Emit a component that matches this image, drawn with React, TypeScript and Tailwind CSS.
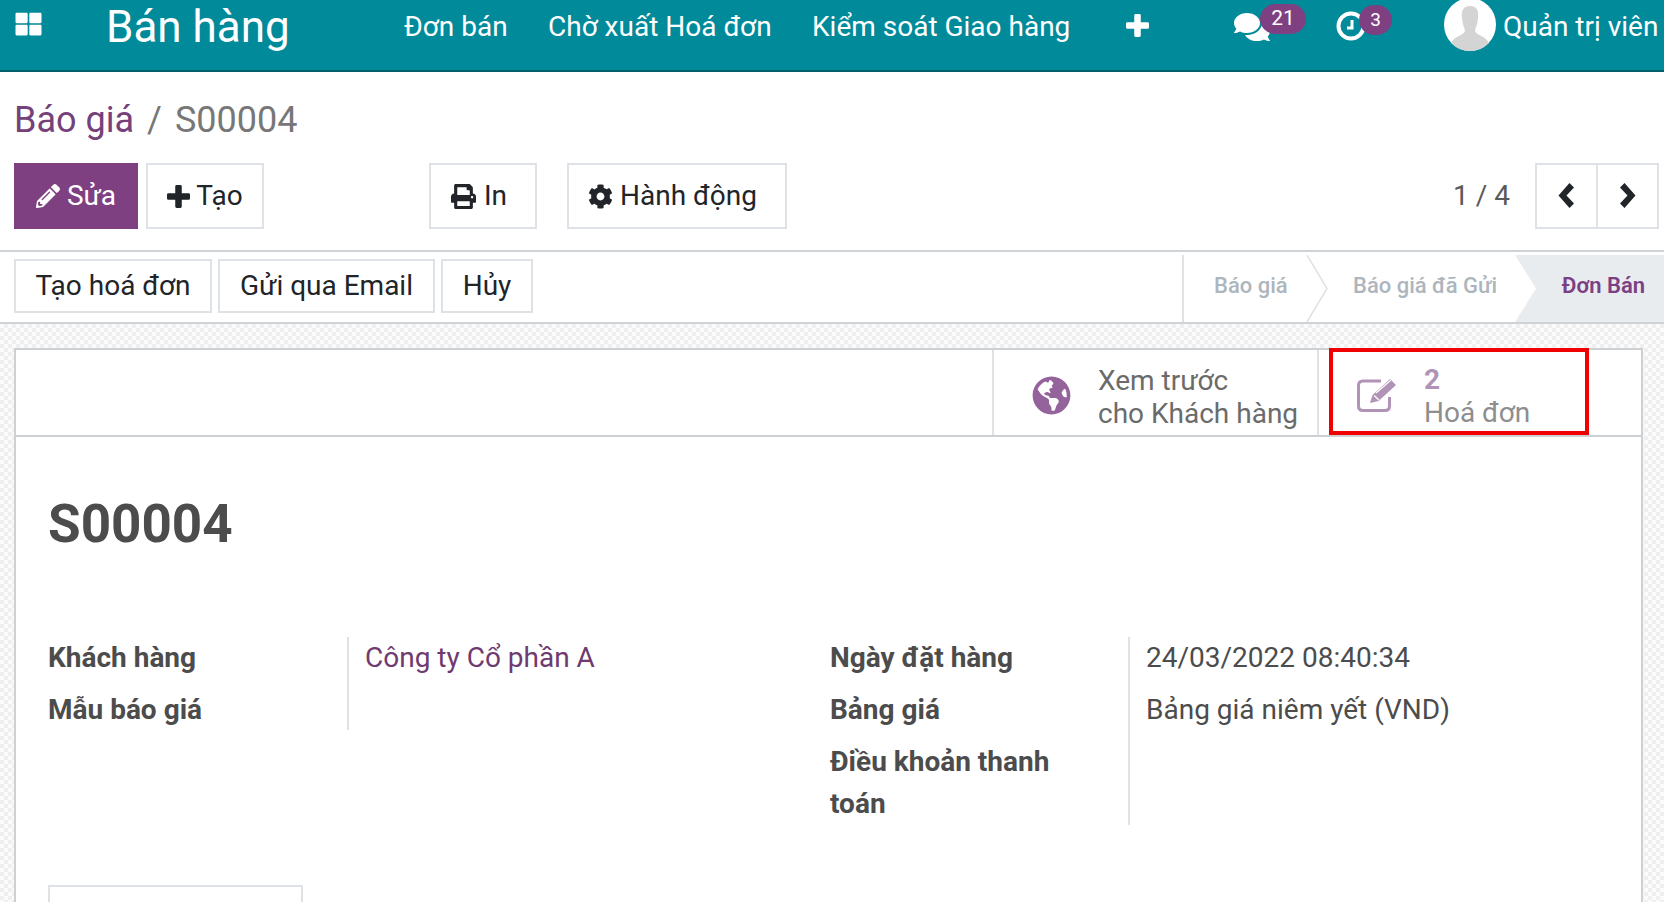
import React from "react";
import { FaThLarge, FaPencilAlt, FaPrint, FaCog, FaComments, FaGlobeAmericas } from "react-icons/fa";

function Btn({ className, children }: { className: string; children: React.ReactNode }) {
  return (
    <div className={"flex items-center justify-center border-2 border-[#dee2e6] text-[#212529] " + className}>
      {children}
    </div>
  );
}

function Plus({ className }: { className: string }) {
  return (
    <svg className={className} viewBox="0 0 24 24" fill="currentColor">
      <path d="M8.6 1.5 Q8.6 0 10 0 H14 Q15.4 0 15.4 1.5 V8.6 H22.5 Q24 8.6 24 10 V14 Q24 15.4 22.5 15.4 H15.4 V22.5 Q15.4 24 14 24 H10 Q8.6 24 8.6 22.5 V15.4 H1.5 Q0 15.4 0 14 V10 Q0 8.6 1.5 8.6 H8.6 Z" />
    </svg>
  );
}

function Chev({ left }: { left?: boolean }) {
  return (
    <svg className="mb-[2px] h-[25px] w-[17px]" viewBox="0 0 17 25" fill="#212529">
      <path d={left ? "M11.5 0 L16 4.5 L8.5 12.5 L16 20.5 L11.5 25 L0.5 12.5 Z" : "M5.5 0 L1 4.5 L8.5 12.5 L1 20.5 L5.5 25 L16.5 12.5 Z"} />
    </svg>
  );
}

export default function App() {
  return (
    <div className="flex h-[902px] w-[1664px] flex-col overflow-hidden bg-white font-['Roboto',sans-serif] text-[28px] text-[#4c4c4c]">
      <header className="flex h-[72px] shrink-0 items-start border-b-2 border-[#02606c] bg-[#018a9a] text-white">
        <FaThLarge className="ml-[15px] mt-[11px] h-[26px] w-[27px] shrink-0" />
        <div className="ml-[64px] mt-[-2px] w-[298px] shrink-0 text-[44px] leading-[58px]">Bán hàng</div>
        <nav className="flex text-[28px] leading-[54px]">
          <span className="w-[144px]">Đơn bán</span>
          <span className="w-[264px]">Chờ xuất Hoá đơn</span>
          <span className="w-[314px]">Kiểm soát Giao hàng</span>
        </nav>
        <Plus className="mt-[14px] h-[23px] w-[23px] shrink-0" />
        <div className="relative ml-[85px] mt-[11px] h-[32px] w-[102px] shrink-0">
          <FaComments className="h-[32px] w-[36px]" />
          <span className="absolute left-[26px] top-[-7px] flex h-[30px] w-[46px] items-center justify-center rounded-[15px] bg-[#7f4082] text-[21px]">21</span>
        </div>
        <div className="relative mt-[11px] h-[30px] w-[108px] shrink-0">
          <svg className="h-[30px] w-[30px]" viewBox="0 0 30 30" fill="none" stroke="#fff">
            <circle cx="15" cy="15" r="12.5" strokeWidth="4" />
            <path d="M16 9 V17 H11" strokeWidth="3" />
          </svg>
          <span className="absolute left-[23px] top-[-6px] flex h-[30px] w-[33px] items-center justify-center rounded-[15px] bg-[#7f4082] text-[19px]">3</span>
        </div>
        <svg className="mt-[-2px] h-[53px] w-[52px] shrink-0" viewBox="0 0 52 53">
          <ellipse cx="26" cy="26.5" rx="26" ry="26.5" fill="#fff" />
          <path d="M26 8 C19 8 17 13 18 20 C18.5 27 21 31 21 33 C20 37 9 39 7 45 C12 50 19 53 26 53 C33 53 40 50 45 45 C43 39 32 37 31 33 C31 31 33.5 27 34 20 C35 13 33 8 26 8 Z" fill="#d4d4d4" />
        </svg>
        <span className="ml-[7px] whitespace-nowrap leading-[54px]">Quản trị viên</span>
      </header>

      <div className="h-[91px] shrink-0 px-[14px] pt-[24px] text-[36px] leading-[48px]">
        <span className="text-[#74417a]">Báo giá</span>
        <span className="ml-[13px] mr-[13px] text-[#777]">/</span>
        <span className="text-[#777]">S00004</span>
      </div>

      <div className="flex h-[66px] shrink-0 items-stretch pl-[14px] pr-[5px]">
        <div className="flex w-[124px] items-center justify-center gap-[7px] bg-[#7f4082] text-white">
          <FaPencilAlt className="h-[24px] w-[24px]" />
          <span>Sửa</span>
        </div>
        <Btn className="ml-[8px] w-[118px] gap-[6px]"><Plus className="h-[23px] w-[23px]" /><span>Tạo</span></Btn>
        <Btn className="ml-[165px] w-[108px] gap-[8px] pr-[8px]"><FaPrint className="h-[25px] w-[25px]" /><span>In</span></Btn>
        <Btn className="ml-[30px] w-[220px] gap-[7px] pr-[9px]"><FaCog className="h-[25px] w-[25px]" /><span>Hành động</span></Btn>
        <div className="ml-auto flex items-center pr-[25px] text-[#5a5a5a]">1 / 4</div>
        <Btn className="w-[63px]"><Chev left /></Btn>
        <Btn className="ml-[-2px] w-[63px]"><Chev /></Btn>
      </div>

      <div className="mt-[21px] flex h-[74px] shrink-0 items-start justify-between border-y-2 border-[#cfd3d6] pl-[14px]">
        <div className="mt-[7px] flex gap-[6px]">
          <Btn className="h-[54px] w-[198px]">Tạo hoá đơn</Btn>
          <Btn className="h-[54px] w-[217px]">Gửi qua Email</Btn>
          <Btn className="h-[54px] w-[92px]">Hủy</Btn>
        </div>
        <div className="mt-[3px] flex h-[67px] w-[482px] items-start border-l-2 border-[#dee2e6] text-[22px] font-medium">
          <div className="relative flex h-[67px] w-[145px] items-center pb-[6px] pl-[30px] text-[#adb5bd]">
            Báo giá
            <svg className="absolute left-[122px] top-0 h-[67px] w-[22px]" viewBox="0 0 22 67">
              <path d="M1 0 L21 33.5 L1 67" fill="#fff" stroke="#dee2e6" strokeWidth="1.5" />
            </svg>
          </div>
          <div className="relative flex h-[67px] w-[186px] items-center pb-[6px] pl-[24px] text-[#adb5bd]">
            Báo giá đã Gửi
          </div>
          <div className="relative flex h-[67px] flex-1 items-center justify-end bg-[#e9ecef] pb-[6px] pr-[19px] font-semibold text-[#7b4083]">
            <svg className="absolute left-0 top-0 h-[67px] w-[22px]" viewBox="0 0 22 67">
              <path d="M0 0 L21 33.5 L0 67 Z" fill="#fff" />
            </svg>
            Đơn Bán
          </div>
        </div>
      </div>

      <main className="min-h-0 flex-1 bg-[#f7f7f7] bg-[repeating-conic-gradient(#efefef_0_25%,#fbfbfb_0_50%)] bg-[length:8px_8px] pl-[14px] pr-[21px] pt-[24px]">
        <div className="h-full border-2 border-b-0 border-[#ced1d4] bg-white">
          <div className="flex h-[87px] items-stretch justify-end border-b-2 border-[#ced1d4] pr-[52px]">
            <div className="flex w-[327px] items-center border-x-2 border-[#dee2e6] pl-[38px]">
              <FaGlobeAmericas className="mt-[5px] h-[39px] w-[39px] shrink-0 text-[#95639b]" />
              <div className="ml-[27px] mt-[8px] whitespace-nowrap leading-[33px] text-[#6b6b6b]">Xem trước<br />cho Khách hàng</div>
            </div>
            <div className="ml-[10px] mt-[-2px] flex h-[87px] w-[260px] items-center border-4 border-[#f00000] pl-[22px]">
              <svg className="mt-[4px] h-[38px] w-[46px] shrink-0 text-[#b193b8]" viewBox="0 0 46 38" fill="none">
                <path d="M26 6 H8 Q3.5 6 3.5 10.5 V31 Q3.5 35.5 8 35.5 H30 Q34.5 35.5 34.5 31 V22" stroke="currentColor" strokeWidth="3" />
                <path d="M15 28 L17.5 20 L35 4 L41 10 L23.5 26 Z" fill="currentColor" />
                <path d="M19 20.5 L24 25 M21 18 L36 5" stroke="#fff" strokeWidth="1.2" />
              </svg>
              <div className="ml-[23px] mt-[8px] leading-[33px] text-[#8e8e8e]">
                <div className="font-bold text-[#b193b8]">2</div>
                <div>Hoá đơn</div>
              </div>
            </div>
          </div>

          <div className="px-[32px]">
            <h1 className="mt-[51px] text-[53px] font-bold leading-[72px] text-[#4c4c4c]">S00004</h1>
            <div className="mt-[77px] flex">
              <div className="flex h-[93px] w-[301px] flex-col border-r-2 border-[#dee2e6] font-bold">
                <div className="leading-[42px]">Khách hàng</div>
                <div className="mt-[10px] leading-[42px]">Mẫu báo giá</div>
              </div>
              <div className="w-[481px] pl-[16px] leading-[42px] text-[#6f3a70]">Công ty Cổ phần A</div>
              <div className="w-[300px] border-r-2 border-[#dee2e6] pr-[70px] font-bold">
                <div className="leading-[42px]">Ngày đặt hàng</div>
                <div className="mt-[10px] leading-[42px]">Bảng giá</div>
                <div className="mt-[10px] leading-[42px]">Điều khoản thanh toán</div>
              </div>
              <div className="pl-[16px]">
                <div className="leading-[42px]">24/03/2022 08:40:34</div>
                <div className="mt-[10px] leading-[42px]">Bảng giá niêm yết (VND)</div>
              </div>
            </div>
            <div className="mt-[60px] h-[40px] w-[255px] border-2 border-[#dee2e6]" />
          </div>
        </div>
      </main>
    </div>
  );
}
